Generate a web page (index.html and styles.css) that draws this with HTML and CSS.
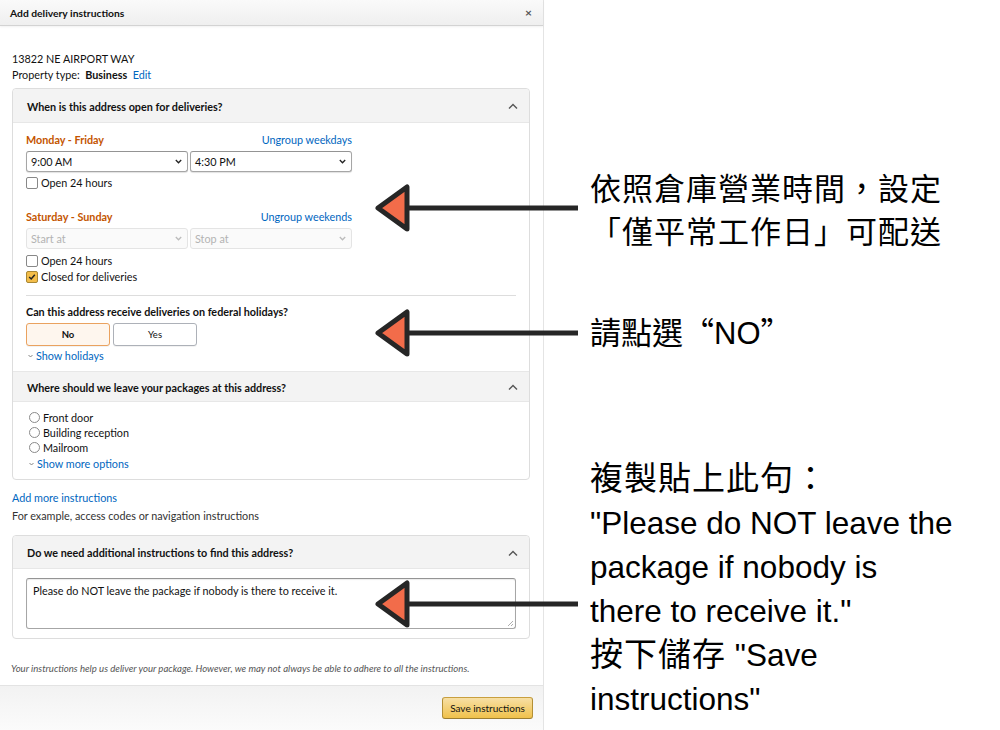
FILE: index.html
```html
<!doctype html>
<html lang="en">
    <head>
        <meta charset="utf-8">
        <title>Add delivery instructions</title>
        <meta name="viewport" content="width=device-width, initial-scale=1">
        <link rel="stylesheet" href="styles.css">
    </head>
    <body>
        <div class="page">
            <div class="modal">
                <div class="modal-header">
                    <span>Add delivery instructions</span>
                    <span class="close">&times;</span>
                </div>

                <div class="modal-body">
                    <div class="address">
                        <div>13822 NE AIRPORT WAY</div>
                        <div>Property type: &nbsp;<b>Business</b> &nbsp;<a class="link">Edit</a></div>
                    </div>

                    <div class="box">
                        <div class="box-header">
                            <span>When is this address open for deliveries?</span>
                            <svg class="caret" width="10" height="6" viewBox="0 0 10 6"><polyline points="1,5.5 5,1.5 9,5.5" /></svg>
                        </div>
                        <div class="box-content">
                            <div class="day-group">
                                <div class="day-row">
                                    <span class="day">Monday - Friday</span>
                                    <a class="link">Ungroup weekdays</a>
                                </div>
                                <div class="selects">
                                    <div class="select">
                                        <span>9:00 AM</span>
                                        <svg width="7" height="5" viewBox="0 0 7 5"><polyline points="0.8,1 3.5,3.8 6.2,1" /></svg>
                                    </div>
                                    <div class="select">
                                        <span>4:30 PM</span>
                                        <svg width="7" height="5" viewBox="0 0 7 5"><polyline points="0.8,1 3.5,3.8 6.2,1" /></svg>
                                    </div>
                                </div>
                                <div class="check"><span class="checkbox"></span>Open 24 hours</div>
                            </div>

                            <div class="day-group weekend">
                                <div class="day-row">
                                    <span class="day">Saturday - Sunday</span>
                                    <a class="link">Ungroup weekends</a>
                                </div>
                                <div class="selects">
                                    <div class="select disabled">
                                        <span>Start at</span>
                                        <svg width="7" height="5" viewBox="0 0 7 5"><polyline points="0.8,1 3.5,3.8 6.2,1" /></svg>
                                    </div>
                                    <div class="select disabled">
                                        <span>Stop at</span>
                                        <svg width="7" height="5" viewBox="0 0 7 5"><polyline points="0.8,1 3.5,3.8 6.2,1" /></svg>
                                    </div>
                                </div>
                                <div class="check"><span class="checkbox"></span>Open 24 hours</div>
                                <div class="check closed">
                                    <span class="checkbox checked">
                                        <svg width="10" height="10" viewBox="0 0 10 10"><polyline points="2.2,5 4.2,7 7.8,2.8" /></svg>
                                    </span>Closed for deliveries
                                </div>
                            </div>

                            <div class="divider"></div>

                            <div class="question">Can this address receive deliveries on federal holidays?</div>
                            <div class="buttons">
                                <span class="btn selected">No</span>
                                <span class="btn">Yes</span>
                            </div>
                            <a class="link toggle">
                                <svg width="5" height="4" viewBox="0 0 5 4"><polyline points="0.5,1 2.5,3 4.5,1" /></svg>Show holidays
                            </a>
                        </div>

                        <div class="box-header second">
                            <span>Where should we leave your packages at this address?</span>
                            <svg class="caret" width="10" height="6" viewBox="0 0 10 6"><polyline points="1,5.5 5,1.5 9,5.5" /></svg>
                        </div>
                        <div class="box-content places">
                            <div class="radio"><span class="dot"></span>Front door</div>
                            <div class="radio"><span class="dot"></span>Building reception</div>
                            <div class="radio"><span class="dot"></span>Mailroom</div>
                            <a class="link toggle">
                                <svg width="5" height="4" viewBox="0 0 5 4"><polyline points="0.5,1 2.5,3 4.5,1" /></svg>Show more options
                            </a>
                        </div>
                    </div>

                    <a class="link add-more">Add more instructions</a>
                    <div class="hint">For example, access codes or navigation instructions</div>

                    <div class="box extra">
                        <div class="box-header tall">
                            <span>Do we need additional instructions to find this address?</span>
                            <svg class="caret" width="10" height="6" viewBox="0 0 10 6"><polyline points="1,5.5 5,1.5 9,5.5" /></svg>
                        </div>
                        <div class="box-content">
                            <div class="textarea">
                                Please do NOT leave the package if nobody is there to receive it.
                                <svg class="grip" width="6" height="6" viewBox="0 0 6 6"><line x1="1" y1="6" x2="6" y2="1" /><line x1="4" y1="6" x2="6" y2="4" /></svg>
                            </div>
                        </div>
                    </div>

                    <p class="note">Your instructions help us deliver your package. However, we may not always be able to adhere to all the instructions.</p>
                </div>

                <div class="modal-footer">
                    <span class="save">Save instructions</span>
                </div>
            </div>

            <div class="notes">
                <div class="note-hours">
                    <div>依照倉庫營業時間，設定</div>
                    <div>「僅平常工作日」可配送</div>
                </div>
                <div class="note-no">請點選<span class="cjk-quote">“</span>NO<span class="cjk-quote">”</span></div>
                <div class="note-copy">
                    <span class="cjk">複製貼上此句：</span><br>
                    "Please do NOT leave the<br>
                    package if nobody is<br>
                    there to receive it."<br>
                    <span class="cjk">按下儲存</span> "Save<br>
                    instructions"
                </div>
            </div>
        </div>

        <!-- pointers drawn over the form -->
        <svg class="arrows" width="1000" height="730" viewBox="0 0 1000 730">
            <g>
                <line x1="404" y1="208" x2="578" y2="208" />
                <polygon points="378,208 407,187 407,229" />
            </g>
            <g>
                <line x1="404" y1="333" x2="578" y2="333" />
                <polygon points="378,333 407,312 407,354" />
            </g>
            <g>
                <line x1="404" y1="604" x2="578" y2="604" />
                <polygon points="378,604 407,583 407,625" />
            </g>
        </svg>
    </body>
</html>
```

FILE: styles.css
```css
body {
    margin: 0;
    background: #fff;
    color: #111;
    font-family: Lato, "Liberation Sans", sans-serif;
}

.page {
    display: flex;
}

.link {
    color: #0066c0;
}

/* modal */

.modal {
    width: 544px;
    height: 730px;
    box-sizing: border-box;
    border-right: 1px solid #e4e4e4;
    display: flex;
    flex-direction: column;
}

.modal-header {
    height: 26px;
    box-sizing: border-box;
    padding: 0 10px;
    display: flex;
    align-items: center;
    justify-content: space-between;
    background: linear-gradient(#fafafa, #efefef);
    border-bottom: 1px solid #d3d3d3;
    box-shadow: 0 1px 2px rgba(0, 0, 0, 0.06);
    font-size: 10.3px;
    font-weight: bold;
}

.close {
    color: #555;
    font-size: 12px;
    margin-right: 1px;
}

.modal-body {
    flex: 1;
    padding: 25px 13px 0 12px;
    font-size: 10.8px;
}

.address {
    line-height: 16px;
}

.address b {
    font-weight: bold;
}

.box {
    margin-top: 5px;
    border: 1px solid #ddd;
    border-radius: 4px;
}

.box-header {
    height: 34px;
    box-sizing: border-box;
    padding: 1px 11px 0 14px;
    display: flex;
    align-items: center;
    justify-content: space-between;
    background: #f3f3f3;
    border-bottom: 1px solid #e7e7e7;
    border-radius: 4px 4px 0 0;
    font-weight: bold;
}

.box-header.second {
    height: 31px;
    border-top: 1px solid #e7e7e7;
    border-radius: 0;
}

.box-header.tall {
    height: 33px;
}

.caret polyline {
    fill: none;
    stroke: #555;
    stroke-width: 1.4;
}

.box-content {
    padding: 10px 13px 8px 13px;
    line-height: 14px;
}

.day-group {
    width: 326px;
}

.day-group.weekend {
    margin-top: 20px;
}

.day-row {
    display: flex;
    justify-content: space-between;
}

.day {
    color: #c45500;
    font-weight: bold;
}

.selects {
    margin-top: 4px;
    display: flex;
    gap: 2px;
}

.select {
    flex: 1;
    height: 21px;
    box-sizing: border-box;
    padding: 0 5px 0 4px;
    display: flex;
    align-items: center;
    justify-content: space-between;
    border: 1px solid #a6a6a6;
    border-top-color: #949494;
    border-radius: 3px;
    box-shadow: 0 1px 1px rgba(0, 0, 0, 0.12);
    background: #fff;
}

.select svg polyline {
    fill: none;
    stroke: #222;
    stroke-width: 1.3;
}

.select.disabled {
    color: #b3b3b3;
    border-color: #e4e4e4;
    box-shadow: none;
    background: #fafafa;
}

.select.disabled svg polyline {
    stroke: #bbb;
}

.check {
    margin-top: 4px;
    display: flex;
    align-items: center;
}

.weekend .check {
    margin-top: 5px;
}

.weekend .check.closed {
    margin-top: 2px;
}

.checkbox {
    width: 12px;
    height: 12px;
    box-sizing: border-box;
    margin-right: 3px;
    border: 1px solid #888;
    border-radius: 2px;
    background: #fff;
    display: flex;
    align-items: center;
    justify-content: center;
}

.checkbox.checked {
    background: #f3bd4a;
    border-color: #a88734;
}

.checkbox.checked polyline {
    fill: none;
    stroke: #222;
    stroke-width: 1.5;
}

.divider {
    margin-top: 11px;
    border-top: 1px solid #ddd;
}

.question {
    margin-top: 9px;
    font-weight: bold;
}

.buttons {
    margin-top: 4px;
    display: flex;
    gap: 3px;
}

.btn {
    width: 84px;
    height: 23px;
    box-sizing: border-box;
    display: flex;
    align-items: center;
    justify-content: center;
    border: 1px solid #adb1b8;
    border-radius: 3px;
    background: #fff;
    box-shadow: 0 1px 0 rgba(0, 0, 0, 0.05);
    font-size: 9.5px;
}

.btn.selected {
    border-color: #eaa25f;
    background: #fef6ee;
    font-weight: bold;
}

.toggle {
    margin-top: 3px;
    display: flex;
    align-items: center;
    gap: 3px;
    padding-left: 2px;
}

.toggle polyline {
    fill: none;
    stroke: #777;
    stroke-width: 0.9;
}

.places {
    padding-top: 8px;
}

.radio {
    height: 15px;
    margin-left: 3px;
    display: flex;
    align-items: center;
}

.dot {
    width: 11px;
    height: 11px;
    box-sizing: border-box;
    margin-right: 3px;
    border: 1px solid #8a8a8a;
    border-radius: 50%;
    background: #fff;
}

.places .toggle {
    margin-top: 2px;
    padding-left: 3px;
}

.add-more {
    display: block;
    margin-top: 11px;
    line-height: 14px;
}

.hint {
    margin-top: 4px;
    line-height: 14px;
    color: #333;
}

.box.extra {
    margin-top: 12px;
}

.box.extra .box-content {
    padding: 9px 13px 9px 13px;
}

.textarea {
    position: relative;
    height: 51px;
    box-sizing: border-box;
    padding: 5px 6px 4px;
    border: 1px solid #a6a6a6;
    border-top-color: #949494;
    border-radius: 3px;
    box-shadow: inset 0 1px 1px rgba(0, 0, 0, 0.08);
    line-height: 14px;
}

.grip {
    position: absolute;
    right: 2px;
    bottom: 2px;
}

.grip line {
    stroke: #999;
    stroke-width: 0.8;
}

.note {
    margin: 24px 0 0 -1px;
    font-size: 9.6px;
    font-style: italic;
    color: #555;
}

.modal-footer {
    height: 45px;
    box-sizing: border-box;
    padding: 11px 10px 0 0;
    display: flex;
    justify-content: flex-end;
    align-items: flex-start;
    border-top: 1px solid #e3e3e3;
    background: linear-gradient(#f2f2f2, #fbfbfb);
}

.save {
    width: 91px;
    height: 22px;
    box-sizing: border-box;
    display: flex;
    align-items: center;
    justify-content: center;
    border: 1px solid #a88734;
    border-color: #c89f3e #b38f35 #9c7e31;
    border-radius: 3px;
    background: linear-gradient(#f7dfa5, #f0c14b);
    font-size: 10px;
    color: #111;
}

/* annotations on the right */

.notes {
    margin-left: 46px;
    display: flex;
    flex-direction: column;
    color: #000;
}

.note-hours {
    margin-top: 165px;
    width: 351px;
    font-family: "Noto Sans CJK TC", sans-serif;
    font-size: 31px;
    line-height: 43px;
}

.note-hours div {
    text-align: justify;
    text-align-last: justify;
}

.note-no {
    margin-top: 58px;
    font-family: "Liberation Sans", "Noto Sans CJK TC", sans-serif;
    font-size: 31px;
    line-height: 43px;
}

.cjk-quote {
    font-family: "Noto Sans CJK TC", sans-serif;
}

.note-copy {
    margin-top: 102px;
    font-family: "Liberation Sans", "Noto Sans CJK TC", sans-serif;
    font-size: 31.5px;
    line-height: 44px;
}

.note-copy .cjk {
    font-size: 33px;
    letter-spacing: 1px;
}

.arrows {
    position: absolute;
    top: 0;
    left: 0;
    pointer-events: none;
}

.arrows line {
    stroke: #262626;
    stroke-width: 5;
}

.arrows polygon {
    fill: #f26c4a;
    stroke: #262626;
    stroke-width: 5;
    stroke-linejoin: round;
}
```
